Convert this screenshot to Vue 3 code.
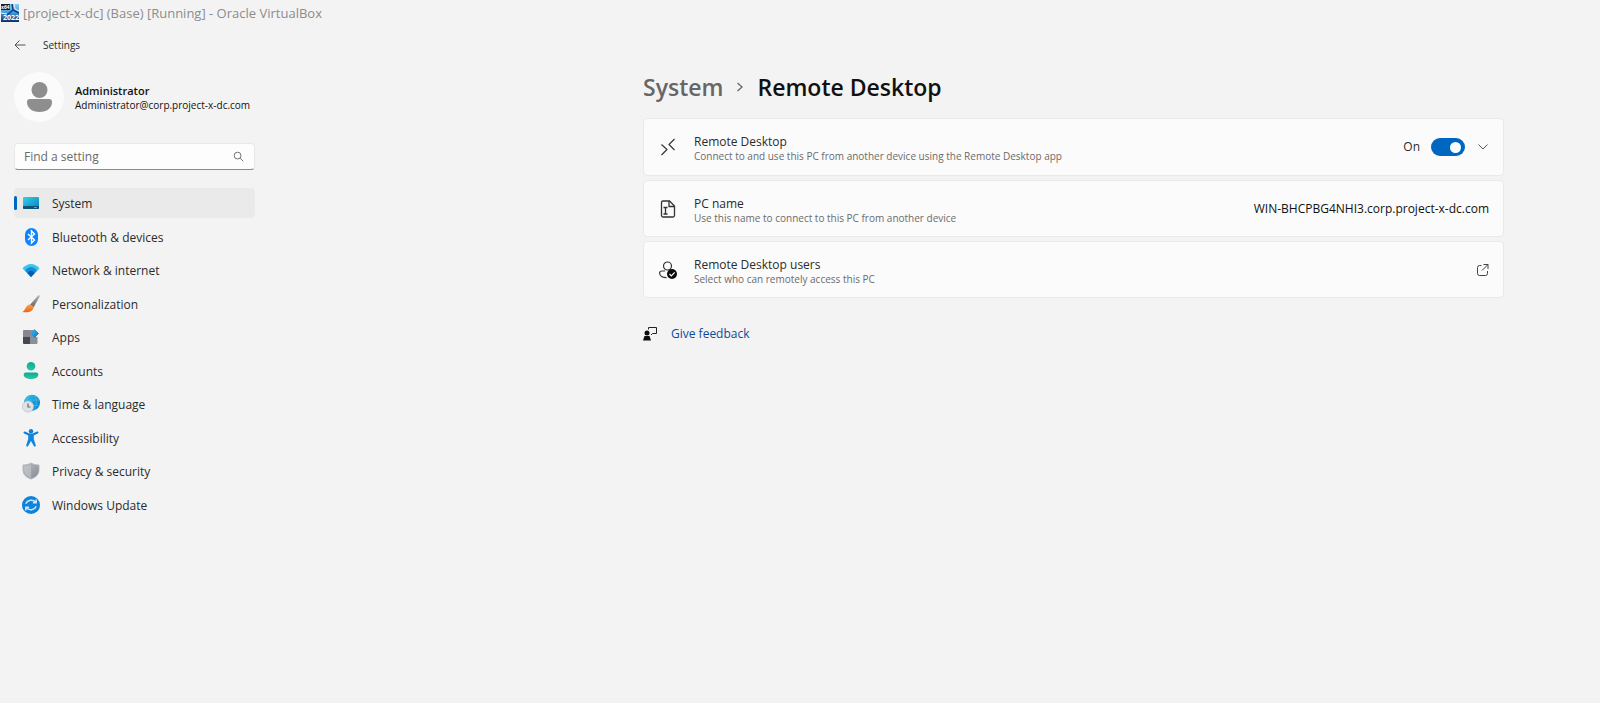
<script setup>
import { ref } from 'vue'

const query = ref('')
const remoteEnabled = ref(true)
const current = ref('system')

const sections = [
  { id: 'system', label: 'System' },
  { id: 'bluetooth', label: 'Bluetooth & devices' },
  { id: 'network', label: 'Network & internet' },
  { id: 'personalization', label: 'Personalization' },
  { id: 'apps', label: 'Apps' },
  { id: 'accounts', label: 'Accounts' },
  { id: 'time', label: 'Time & language' },
  { id: 'accessibility', label: 'Accessibility' },
  { id: 'privacy', label: 'Privacy & security' },
  { id: 'update', label: 'Windows Update' },
]
</script>

<template>
  <div class="window">
    <svg class="defs" aria-hidden="true">
      <defs>
        <linearGradient id="g-screen" x1="0" y1="0" x2="1" y2="1">
          <stop offset="0" stop-color="#35d3e0" /><stop offset="1" stop-color="#0b7cc4" />
        </linearGradient>
        <linearGradient id="g-handle" x1="1" y1="0" x2="0" y2="1">
          <stop offset="0" stop-color="#b4b8bc" /><stop offset="1" stop-color="#5c6065" />
        </linearGradient>
        <linearGradient id="g-brush" x1="0" y1="0" x2="0" y2="1">
          <stop offset="0" stop-color="#ffa040" /><stop offset="1" stop-color="#e8641c" />
        </linearGradient>
        <linearGradient id="g-diamond" x1="0" y1="0" x2="1" y2="1">
          <stop offset="0" stop-color="#35bdf2" /><stop offset="1" stop-color="#0a78cf" />
        </linearGradient>
        <linearGradient id="g-account" x1="0" y1="0" x2="0" y2="1">
          <stop offset="0" stop-color="#10a890" /><stop offset="1" stop-color="#2ac9a8" />
        </linearGradient>
        <linearGradient id="g-globe" x1="0" y1="0" x2="1" y2="1">
          <stop offset="0" stop-color="#35c6e4" /><stop offset="1" stop-color="#0a72c8" />
        </linearGradient>
        <linearGradient id="g-shield" x1="0" y1="0" x2="1" y2="1">
          <stop offset="0" stop-color="#b9bdc2" /><stop offset="1" stop-color="#858a91" />
        </linearGradient>
        <linearGradient id="g-logo" x1="0" y1="0" x2="0" y2="1">
          <stop offset="0" stop-color="#8fcdf2" /><stop offset="0.500" stop-color="#3c9ade" /><stop offset="1" stop-color="#0c2f66" />
        </linearGradient>
      </defs>
      <symbol id="i-system" viewBox="0 0 20 20">
        <rect x="2" y="4" width="16" height="12" rx="1" fill="url(#g-screen)" />
        <path d="M2 13h16v2a1 1 0 0 1-1 1H3a1 1 0 0 1-1-1z" fill="#0c5478" />
        <path d="M13 14.500h3" stroke="#4fa3c4" />
      </symbol>
      <symbol id="i-bluetooth" viewBox="0 0 20 20">
        <rect x="4" y="1" width="13" height="18" rx="6.500" fill="#0a84ff" />
        <path d="M7 7l6.500 6-3 3V4l3 3L7 13" fill="none" stroke="#fff" stroke-width="1.400" />
      </symbol>
      <symbol id="i-network" viewBox="0 0 20 20">
        <path d="M1.500 8.500C6 2.500 14 2.500 18.500 8.500L10 17z" fill="#3bc4ee" />
        <path d="M4 10.500C7.500 5.800 12.500 5.800 16 10.500L10 17z" fill="#168bd8" />
        <path d="M6.300 13C8.500 10 11.500 10 13.700 13L10 17z" fill="#0a5ea8" />
      </symbol>
      <symbol id="i-personalization" viewBox="0 0 20 20">
        <path d="M17.200 1.600c1-.8 1.900 0 1.400 1.100L12.600 13.500 9 10.800z" fill="url(#g-handle)" />
        <path d="M8.500 10.500c2.500.2 4 1.700 3.800 3.800C11.500 18 6.500 19 1.500 18c2.800-1.200 2.800-6.500 7-7.500z" fill="url(#g-brush)" />
      </symbol>
      <symbol id="i-apps" viewBox="0 0 20 20">
        <path d="M2 4a1 1 0 0 1 1-1h6v7H2z" fill="#85898d" />
        <path d="M2 10h7v7H3a1 1 0 0 1-1-1z" fill="#45494d" />
        <path d="M9 10h7.500v6a1 1 0 0 1-1 1H9zM9 3h3v7H9z" fill="#8c9094" />
        <path d="M13.500 2.500l4 4-4 4-4-4z" fill="url(#g-diamond)" stroke="url(#g-diamond)" stroke-linejoin="round" />
      </symbol>
      <symbol id="i-accounts" viewBox="0 0 20 20">
        <circle cx="10" cy="5.300" r="4.300" fill="url(#g-account)" />
        <path d="M5 11.500h10c1.600 0 2.300 1 2.300 2 0 3-3 4.500-7.300 4.500s-7.300-1.500-7.300-4.500c0-1 .7-2 2.300-2z" fill="url(#g-account)" />
      </symbol>
      <symbol id="i-time" viewBox="0 0 20 20">
        <circle cx="11" cy="8.700" r="8" fill="url(#g-globe)" />
        <path d="M4 6h14M12 11.500h6M14 1.500c2 4 2 10-1 15M8 1.500C6 4 6 6 6 8" fill="none" stroke="#4cc4ee" stroke-width=".6" />
        <circle cx="7" cy="12.500" r="5.600" fill="#dfe2e5" stroke="#b5bbc1" stroke-width=".6" />
        <path d="M7 9.500v3.500h2.500" fill="none" stroke="#666c72" stroke-width="1.200" />
      </symbol>
      <symbol id="i-accessibility" viewBox="0 0 20 20">
        <circle cx="10" cy="3.200" r="2.200" fill="#0f7fdc" />
        <path d="M3.500 4.500L8 6.500h4l4.500-2" fill="none" stroke="#0f7fdc" stroke-width="2" stroke-linecap="round" stroke-linejoin="round" />
        <path d="M7.200 6h5.600v5l2 6.300c.3 1.200-1.500 1.700-2 .6L10 13l-2.800 4.900c-.5 1.100-2.300.6-2-.6l2-6.300z" fill="#0f86e2" />
      </symbol>
      <symbol id="i-privacy" viewBox="0 0 20 20">
        <path d="M10 2c2.500 1.500 5 2 8 2V9c0 4.500-3.500 7.500-8 9-4.500-1.500-8-4.500-8-9V4c3 0 5.500-.5 8-2z" fill="url(#g-shield)" stroke="#b3b7bc" />
        <path d="M10 3.500V17c-4-1.500-6.800-4-6.800-8V5.200C6 5 8 4.500 10 3.500z" fill="#c8ccd0" opacity=".6" />
      </symbol>
      <symbol id="i-update" viewBox="0 0 20 20">
        <circle cx="10" cy="10" r="9" fill="#0f83d8" />
        <path d="M4.800 8.800C6.500 4.800 12 4 15 7.500M15.200 4.500v3.300h-3.300M15.200 11.200C13.500 15.200 8 16 5 12.500M4.800 15.500v-3.300h3.300" fill="none" stroke="#c4e8ff" stroke-width="1.500" />
      </symbol>
    </svg>

    <header class="titlebar">
      <svg class="logo" viewBox="0 0 18 18" aria-hidden="true">
        <rect width="18" height="18" fill="url(#g-logo)" />
        <path d="M11 0l1 6 6 3M12 6L6 11" fill="none" stroke="#0b3f7c" stroke-width="1.500" />
        <path d="M13 0l1 5 4 2M0 9l6 1" fill="none" stroke="#e2f4ff" />
        <rect width="9" height="6" fill="#16202a" />
        <text x="0" y="5" class="logo-text" fill="#fff">x64</text>
        <text x="2" y="16" class="logo-text year" fill="#fff">2022</text>
      </svg>
      <span>[project-x-dc] (Base) [Running] - Oracle VirtualBox</span>
    </header>

    <div class="settings">
      <aside class="sidebar">
        <div class="app-head">
          <button class="icon-button" type="button" aria-label="Back">
            <svg class="back" viewBox="0 0 12 12" aria-hidden="true">
              <path d="M11.500 6H1M5.500 1.500L1 6l4.500 4.500" fill="none" stroke="#555" />
            </svg>
          </button>
          <span>Settings</span>
        </div>

        <div class="profile">
          <svg class="avatar" viewBox="0 0 50 50" aria-hidden="true">
            <circle cx="25" cy="25" r="25" fill="#fbfbfb" />
            <circle cx="25.500" cy="18" r="8" fill="#8e8e8e" />
            <path d="M16 27h19c2 0 3 1.300 3 3 0 6-5 10-12.500 10S13 36 13 30c0-1.700 1-3 3-3z" fill="#8e8e8e" />
          </svg>
          <div>
            <div class="name">Administrator</div>
            <div class="email">Administrator@corp.project-x-dc.com</div>
          </div>
        </div>

        <label class="search">
          <input v-model="query" type="text" placeholder="Find a setting" aria-label="Find a setting" />
          <svg viewBox="0 0 12 12" aria-hidden="true">
            <circle cx="5" cy="5" r="3.700" fill="none" stroke="#666" />
            <path d="M7.800 7.800l3.400 3.400" stroke="#666" />
          </svg>
        </label>

        <nav class="nav" aria-label="Settings">
          <a
            v-for="s in sections"
            :key="s.id"
            :href="'#' + s.id"
            :class="{ active: s.id === current }"
            @click.prevent="current = s.id"
          >
            <svg aria-hidden="true"><use :href="'#i-' + s.id" /></svg>
            <span>{{ s.label }}</span>
          </a>
        </nav>
      </aside>

      <main class="content">
        <h1 class="crumbs">
          <a href="#system">System</a>
          <svg viewBox="0 0 8 12" aria-hidden="true">
            <path d="M1.500 2L6 6l-4.500 4" fill="none" stroke="#666" stroke-width="1.300" />
          </svg>
          <span>Remote Desktop</span>
        </h1>

        <div class="cards">
          <section class="card tall">
            <svg class="card-icon" viewBox="0 0 20 20" aria-hidden="true">
              <path d="M3.500 7.500L9 12.500 3.500 18M16.500 2L11 7.500 16.500 13" fill="none" stroke="#333" stroke-width="1.200" />
            </svg>
            <div class="text">
              <label class="title" for="remote">Remote Desktop</label>
              <p>Connect to and use this PC from another device using the Remote Desktop app</p>
            </div>
            <div class="control">
              <span class="state">{{ remoteEnabled ? 'On' : 'Off' }}</span>
              <input id="remote" v-model="remoteEnabled" class="switch" type="checkbox" role="switch" />
              <button class="icon-button" type="button" aria-label="Show more">
                <svg class="chevron" viewBox="0 0 12 12" aria-hidden="true">
                  <path d="M1.500 3.500L6 8l4.500-4.500" fill="none" stroke="#555" />
                </svg>
              </button>
            </div>
          </section>

          <section class="card">
            <svg class="card-icon" viewBox="0 0 20 20" aria-hidden="true">
              <path d="M5 2h6.500L16.500 7v9.500a1.500 1.500 0 0 1-1.500 1.500H5a1.500 1.500 0 0 1-1.500-1.500v-13A1.500 1.500 0 0 1 5 2z" fill="none" stroke="#333" stroke-width="1.300" />
              <path d="M11 2v5.500h5.500M5.500 8.500h4M5.500 15h4M7.500 8.500V15" fill="none" stroke="#333" stroke-width="1.300" />
            </svg>
            <div class="text">
              <div class="title">PC name</div>
              <p>Use this name to connect to this PC from another device</p>
            </div>
            <span class="value">WIN-BHCPBG4NHI3.corp.project-x-dc.com</span>
          </section>

          <section class="card">
            <svg class="card-icon" viewBox="0 0 20 20" aria-hidden="true">
              <circle cx="9.500" cy="6" r="4" fill="none" stroke="#333" stroke-width="1.200" />
              <path d="M7 11H4c-1.500 0-2.400.8-2.400 2 0 2.800 3 4.700 7 4.700" fill="none" stroke="#333" stroke-width="1.200" />
              <circle cx="14" cy="14" r="5" fill="#0c0c0c" />
              <path d="M11.500 14l1.800 1.800 3.400-3.400" fill="none" stroke="#fff" stroke-width="1.200" />
            </svg>
            <div class="text">
              <div class="title">Remote Desktop users</div>
              <p>Select who can remotely access this PC</p>
            </div>
            <button class="icon-button" type="button" aria-label="Open Remote Desktop users">
              <svg class="open" viewBox="0 0 12 12" aria-hidden="true">
                <path d="M4.500 1.500H2.500a2 2 0 0 0-2 2V9.500a2 2 0 0 0 2 2H8.500a2 2 0 0 0 2-2V7M6.500.5h4.500V5M11 .5L5 6.500" fill="none" stroke="#444" />
              </svg>
            </button>
          </section>
        </div>

        <div class="feedback">
          <svg viewBox="0 0 14 14" aria-hidden="true">
            <path d="M5.500 2.500V.5h8v6H9.500L8 8" fill="none" stroke="#222" />
            <circle cx="4" cy="6" r="2.500" fill="#0c0c0c" />
            <path d="M1.500 9h5L8 13.500H0z" fill="#0c0c0c" />
          </svg>
          <a href="#feedback">Give feedback</a>
        </div>
      </main>
    </div>
  </div>
</template>

<style>
body {
  background: #f3f3f3;
}
</style>

<style scoped>
.window {
  min-height: 100vh;
  background: #f3f3f3;
  color: #2b2b2b;
  font: 12px/16px "Open Sans", "Noto Sans", sans-serif;
}
.defs {
  position: absolute;
  width: 0;
  height: 0;
}
.titlebar {
  display: flex;
  align-items: center;
  gap: 4px;
  height: 26px;
  padding-left: 1px;
  color: #8c8c8c;
  font-size: 13px;
}
.logo {
  width: 18px;
  height: 18px;
}
.logo-text {
  font: bold 5px "Open Sans", sans-serif;
}
.year {
  font-size: 7px;
}
.settings {
  display: flex;
}
.sidebar {
  flex: none;
  width: 241px;
  padding-left: 14px;
}
.icon-button {
  display: flex;
  padding: 0;
  border: 0;
  background: none;
}
.app-head {
  display: flex;
  align-items: center;
  gap: 17px;
  height: 38px;
  font-size: 10px;
}
.back {
  width: 12px;
  height: 12px;
}
.profile {
  display: flex;
  align-items: center;
  gap: 11px;
  margin-top: 8px;
  color: #111;
}
.avatar {
  width: 50px;
  height: 50px;
}
.name {
  padding-top: 2px;
  font-size: 11px;
  font-weight: 600;
  line-height: 14px;
}
.email {
  font-size: 10px;
  line-height: 14px;
}
.search {
  display: flex;
  align-items: center;
  box-sizing: border-box;
  height: 27px;
  margin-top: 21px;
  padding: 0 10px 0 9px;
  border: 1px solid #e8e8e8;
  border-bottom: 1px solid #8a8a8a;
  border-radius: 4px;
  background: #fdfdfd;
}
.search input {
  flex: 1;
  min-width: 0;
  padding: 0;
  border: 0;
  outline: 0;
  background: none;
  color: #222;
  font: inherit;
}
.search input::placeholder {
  color: #6b6b6b;
  opacity: 1;
}
.search svg {
  width: 11px;
  height: 11px;
}
.nav {
  display: flex;
  flex-direction: column;
  justify-content: space-between;
  height: 332px;
  margin-top: 18px;
}
.nav a {
  position: relative;
  display: flex;
  align-items: center;
  gap: 11px;
  height: 30px;
  padding-left: 7px;
  border-radius: 4px;
  color: #2b2b2b;
  text-decoration: none;
}
.nav a.active {
  background: #eaeaea;
}
.nav a.active::before {
  content: "";
  position: absolute;
  left: 0;
  width: 3px;
  height: 14px;
  border-radius: 2px;
  background: #0067c0;
}
.nav svg {
  width: 20px;
  height: 20px;
}
.nav span {
  padding-top: 2px;
}
.content {
  flex: 1;
  max-width: 861px;
  margin: 0 96px 0 auto;
}
.crumbs {
  display: flex;
  align-items: center;
  gap: 13px;
  margin: 45px 0 0;
  color: #111;
  font-size: 23px;
  font-weight: 600;
  line-height: 32px;
}
.crumbs a {
  color: #666;
  text-decoration: none;
}
.crumbs svg {
  width: 8px;
  height: 12px;
}
.cards {
  display: grid;
  gap: 4px;
  margin-top: 15px;
}
.card {
  display: flex;
  align-items: center;
  box-sizing: border-box;
  min-height: 57px;
  padding: 0 14px;
  border: 1px solid #e9e9e9;
  border-radius: 4px;
  background: #fbfbfb;
}
.tall {
  min-height: 58px;
}
.card-icon {
  flex: none;
  width: 20px;
  height: 20px;
}
.text {
  flex: 1;
  margin-left: 16px;
  padding-top: 3px;
}
.title {
  display: block;
  line-height: 15px;
}
.text p {
  margin: 0;
  color: #6b6b6b;
  font-size: 10px;
  line-height: 14px;
}
.control {
  display: flex;
  align-items: center;
}
.state {
  margin-right: 11px;
}
.switch {
  display: flex;
  align-items: center;
  justify-content: flex-end;
  appearance: none;
  box-sizing: border-box;
  width: 34px;
  height: 18px;
  margin: 0 12px 0 0;
  padding: 0 4px;
  border-radius: 9px;
  background: #0067c0;
}
.switch::before {
  content: "";
  width: 11px;
  height: 11px;
  border-radius: 50%;
  background: #fff;
}
.switch:not(:checked) {
  justify-content: flex-start;
  background: #8a8a8a;
}
.chevron,
.open {
  width: 12px;
  height: 12px;
}
.value {
  color: #111;
}
.feedback {
  display: flex;
  align-items: center;
  gap: 14px;
  margin-top: 28px;
}
.feedback svg {
  width: 14px;
  height: 14px;
}
.feedback a {
  color: #0c4a9e;
  text-decoration: none;
}
</style>
